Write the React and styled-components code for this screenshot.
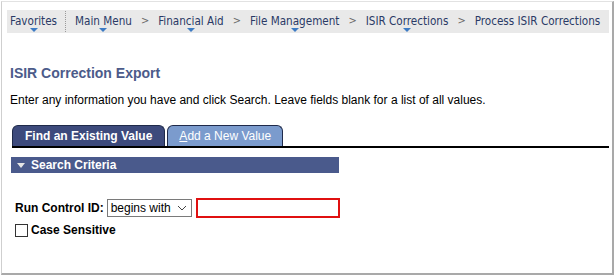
import React from 'react'
import styled, { createGlobalStyle } from 'styled-components'

const GlobalStyle = createGlobalStyle`
  html, body {
    margin: 0;
    padding: 0;
    background: #fff;
  }
  body {
    font-family: "Liberation Sans", Arial, sans-serif;
    font-size: 12px;
    color: #000;
  }
`

const Frame = styled.div`
  box-sizing: border-box;
  width: 613px;
  height: 274px;
  margin: 1px 0 0 1px;
  border-top: 1px solid #e2e2e2;
  border-left: 1px solid #cfcfcf;
  border-right: 2px solid #a9a9a9;
  border-bottom: 2px solid #a9a9a9;
  padding: 8px 3px 0 5px;
`

const CrumbBar = styled.nav`
  display: flex;
  align-items: flex-start;
  height: 23px;
  background: #e9e9e9;
  font-family: "DejaVu Sans Condensed", "DejaVu Sans", sans-serif;
  font-size: 11.6px;
  color: #2a3a66;
  padding-left: 3px;
  overflow: hidden;
`

const Crumb = styled.span`
  position: relative;
  padding-top: 4px;
  white-space: nowrap;
  &::after {
    content: '';
    display: ${p => (p.$menu ? 'block' : 'none')};
    position: absolute;
    left: 50%;
    top: 18px;
    margin-left: -4px;
    border-left: 4px solid transparent;
    border-right: 4px solid transparent;
    border-top: 4px solid #3d7bc4;
  }
`

const Divider = styled.span`
  width: 0;
  height: 21px;
  border-left: 1px dotted #9a9a9a;
  margin: 1px 9px 0 8px;
`

const Chevron = styled.span`
  padding-top: 4px;
  margin: 0 9px;
  color: #6a6a6a;
  font-size: 11px;
`

const Content = styled.div`
  padding: 32px 0 0 3px;
`

const Title = styled.h1`
  margin: 0;
  font-size: 14px;
  font-weight: bold;
  color: #4c5b8a;
  line-height: 17px;
`

const Intro = styled.p`
  margin: 11px 0 0;
  font-size: 12px;
  line-height: 15px;
`

const TabRow = styled.div`
  display: flex;
  align-items: flex-end;
  gap: 2px;
  margin: 17px 0 0 2px;
  border-bottom: 2px solid #000;
`

const Tab = styled.div`
  box-sizing: border-box;
  height: 21px;
  padding: 0 ${p => (p.$active ? '12px' : '11px')};
  border: 1px solid #1f2a4a;
  border-bottom: none;
  border-radius: 6px 6px 0 0;
  background: ${p => (p.$active ? '#3d4a7c' : '#7b9bcd')};
  color: #fff;
  font-weight: ${p => (p.$active ? 'bold' : 'normal')};
  font-size: 12px;
  line-height: 20px;
  white-space: nowrap;
  u {
    text-decoration: underline;
  }
`

const SectionBar = styled.div`
  display: flex;
  align-items: center;
  gap: 6px;
  width: 328px;
  height: 16px;
  margin: 9px 0 0 1px;
  padding-left: 6px;
  box-sizing: border-box;
  background: #4a5a8c;
  color: #fff;
  font-weight: bold;
  font-size: 12px;
`

const Caret = styled.span`
  width: 0;
  height: 0;
  border-left: 4px solid transparent;
  border-right: 4px solid transparent;
  border-top: 5px solid #e6e6e6;
`

const FieldRow = styled.div`
  display: flex;
  align-items: center;
  gap: 3px;
  margin: 25px 0 0 5px;
`

const Label = styled.label`
  font-weight: bold;
  font-size: 12px;
`

const FakeSelect = styled.div`
  box-sizing: border-box;
  display: flex;
  align-items: center;
  justify-content: space-between;
  width: 85px;
  height: 18px;
  padding: 0 4px 0 3px;
  border: 1px solid #7a7a7a;
  background: #fff;
  font-size: 12px;
`

const TextInput = styled.input`
  box-sizing: border-box;
  width: 144px;
  height: 20px;
  margin-left: 1px;
  border: 2px solid #e01010;
  outline: none;
  background: #fff;
`

const CheckRow = styled.div`
  display: flex;
  align-items: center;
  gap: 3px;
  margin: 5px 0 0 5px;
`

const Box = styled.span`
  box-sizing: border-box;
  width: 13px;
  height: 13px;
  border: 1px solid #333;
  background: #fff;
`

const crumbs = [
  { label: 'Main Menu', menu: true },
  { label: 'Financial Aid', menu: true },
  { label: 'File Management', menu: true },
  { label: 'ISIR Corrections', menu: true },
  { label: 'Process ISIR Corrections', menu: false }
]

export default function App() {
  return (
    <Frame>
      <GlobalStyle />
      <CrumbBar>
        <Crumb $menu>Favorites</Crumb>
        <Divider />
        {crumbs.map((c, i) => (
          <React.Fragment key={c.label}>
            {i > 0 && <Chevron>&gt;</Chevron>}
            <Crumb $menu={c.menu}>{c.label}</Crumb>
          </React.Fragment>
        ))}
      </CrumbBar>
      <Content>
        <Title>ISIR Correction Export</Title>
        <Intro>Enter any information you have and click Search. Leave fields blank for a list of all values.</Intro>
        <TabRow>
          <Tab $active>Find an Existing Value</Tab>
          <Tab><u>A</u>dd a New Value</Tab>
        </TabRow>
        <SectionBar>
          <Caret />
          Search Criteria
        </SectionBar>
        <FieldRow>
          <Label>Run Control ID:</Label>
          <FakeSelect>
            <span>begins with</span>
            <svg width="10" height="6" viewBox="0 0 10 6">
              <path d="M1 1l4 4 4-4" fill="none" stroke="#444" strokeWidth="1" />
            </svg>
          </FakeSelect>
          <TextInput type="text" />
        </FieldRow>
        <CheckRow>
          <Box />
          <Label>Case Sensitive</Label>
        </CheckRow>
      </Content>
    </Frame>
  )
}
